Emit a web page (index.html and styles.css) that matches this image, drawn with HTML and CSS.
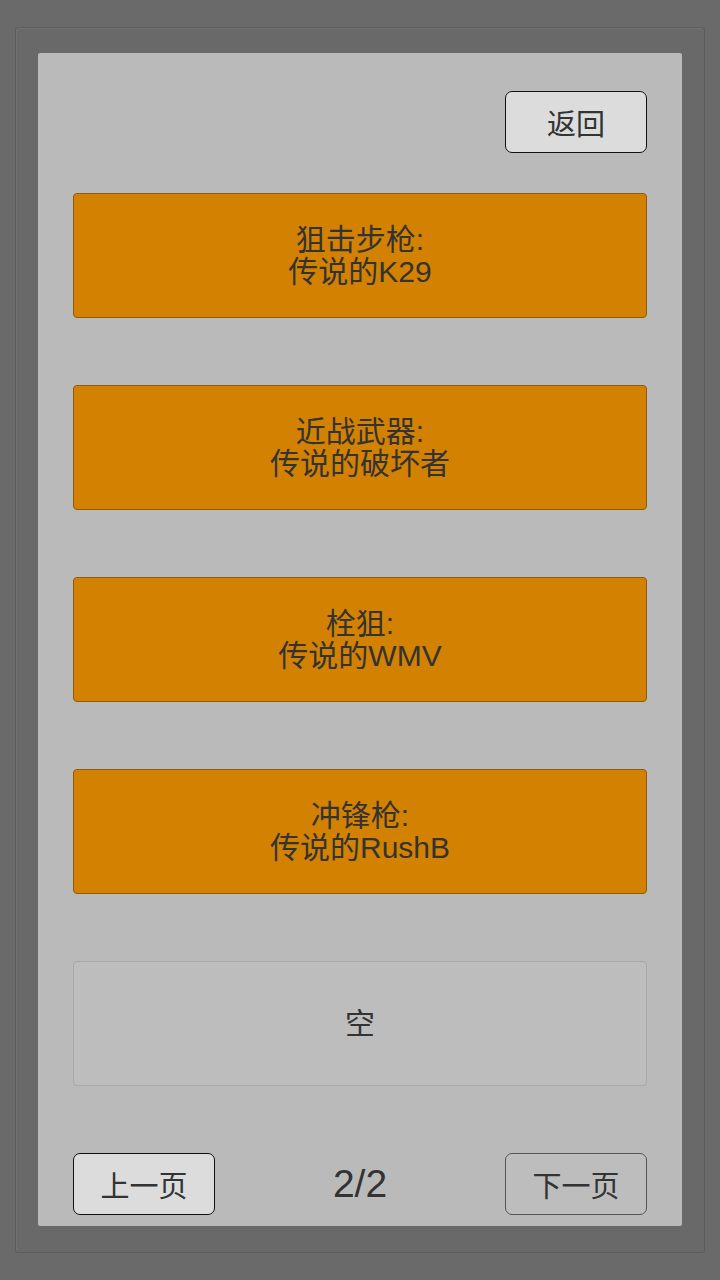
FILE: index.html
```html
<!DOCTYPE html>
<html lang="zh-CN">
<head>
  <meta charset="UTF-8" />
  <meta name="viewport" content="width=device-width, initial-scale=1.0" />
  <title>武器列表</title>
  <link rel="stylesheet" href="styles.css">
</head>
<body>
  <div class="frame">
    <div class="panel">
      <div class="top-bar">
        <button class="btn">返回</button>
      </div>

      <div class="slots">
        <div class="slot">狙击步枪:<br>传说的K29</div>
        <div class="slot">近战武器:<br>传说的破坏者</div>
        <div class="slot">栓狙:<br>传说的WMV</div>
        <div class="slot">冲锋枪:<br>传说的RushB</div>
        <div class="slot empty">空</div>
      </div>

      <div class="pager">
        <button class="btn">上一页</button>
        <span class="page-num">2/2</span>
        <button class="btn" disabled>下一页</button>
      </div>
    </div>
  </div>
</body>
</html>
```

FILE: styles.css
```css
body {
  margin: 0;
  background-color: #6a6a6a;
  font-family: 'Liberation Sans', 'Noto Sans CJK SC', sans-serif;
  color: #333;
}

.frame {
  box-sizing: border-box;
  margin: 27px 15px 0;
  height: 1226px;
  padding: 25px 22px 26px;
  background: #696969;
  border: 1px solid #5c5c5c;
  border-radius: 3px;
  box-shadow: inset 1px 1px 0 #727272;
}

.panel {
  box-sizing: border-box;
  height: 100%;
  padding: 38px 35px 11px;
  background: #bababa;
  border-radius: 2px;
  display: flex;
  flex-direction: column;
}

.top-bar {
  display: flex;
  justify-content: flex-end;
}

.btn {
  box-sizing: border-box;
  width: 142px;
  height: 62px;
  padding: 0;
  background: #dcdcdc;
  border: 1.5px solid #111;
  border-radius: 7px;
  font-family: inherit;
  font-size: 29px;
  color: #333;
}

.btn:disabled {
  background: #bdbdbd;
  border-color: #555;
  color: #333;
}

.slots {
  margin-top: 40px;
  display: flex;
  flex-direction: column;
  gap: 67px;
}

.slot {
  box-sizing: border-box;
  height: 125px;
  display: flex;
  align-items: center;
  justify-content: center;
  text-align: center;
  font-size: 30px;
  line-height: 32px;
  background: #d38100;
  border: 1px solid #8f5a12;
  border-radius: 4px;
}

.slot.empty {
  background: #bdbdbd;
  border-color: #a9a9a9;
}

.pager {
  margin-top: auto;
  display: flex;
  align-items: center;
  justify-content: space-between;
}

.page-num {
  font-size: 39px;
  color: #333;
}
```
